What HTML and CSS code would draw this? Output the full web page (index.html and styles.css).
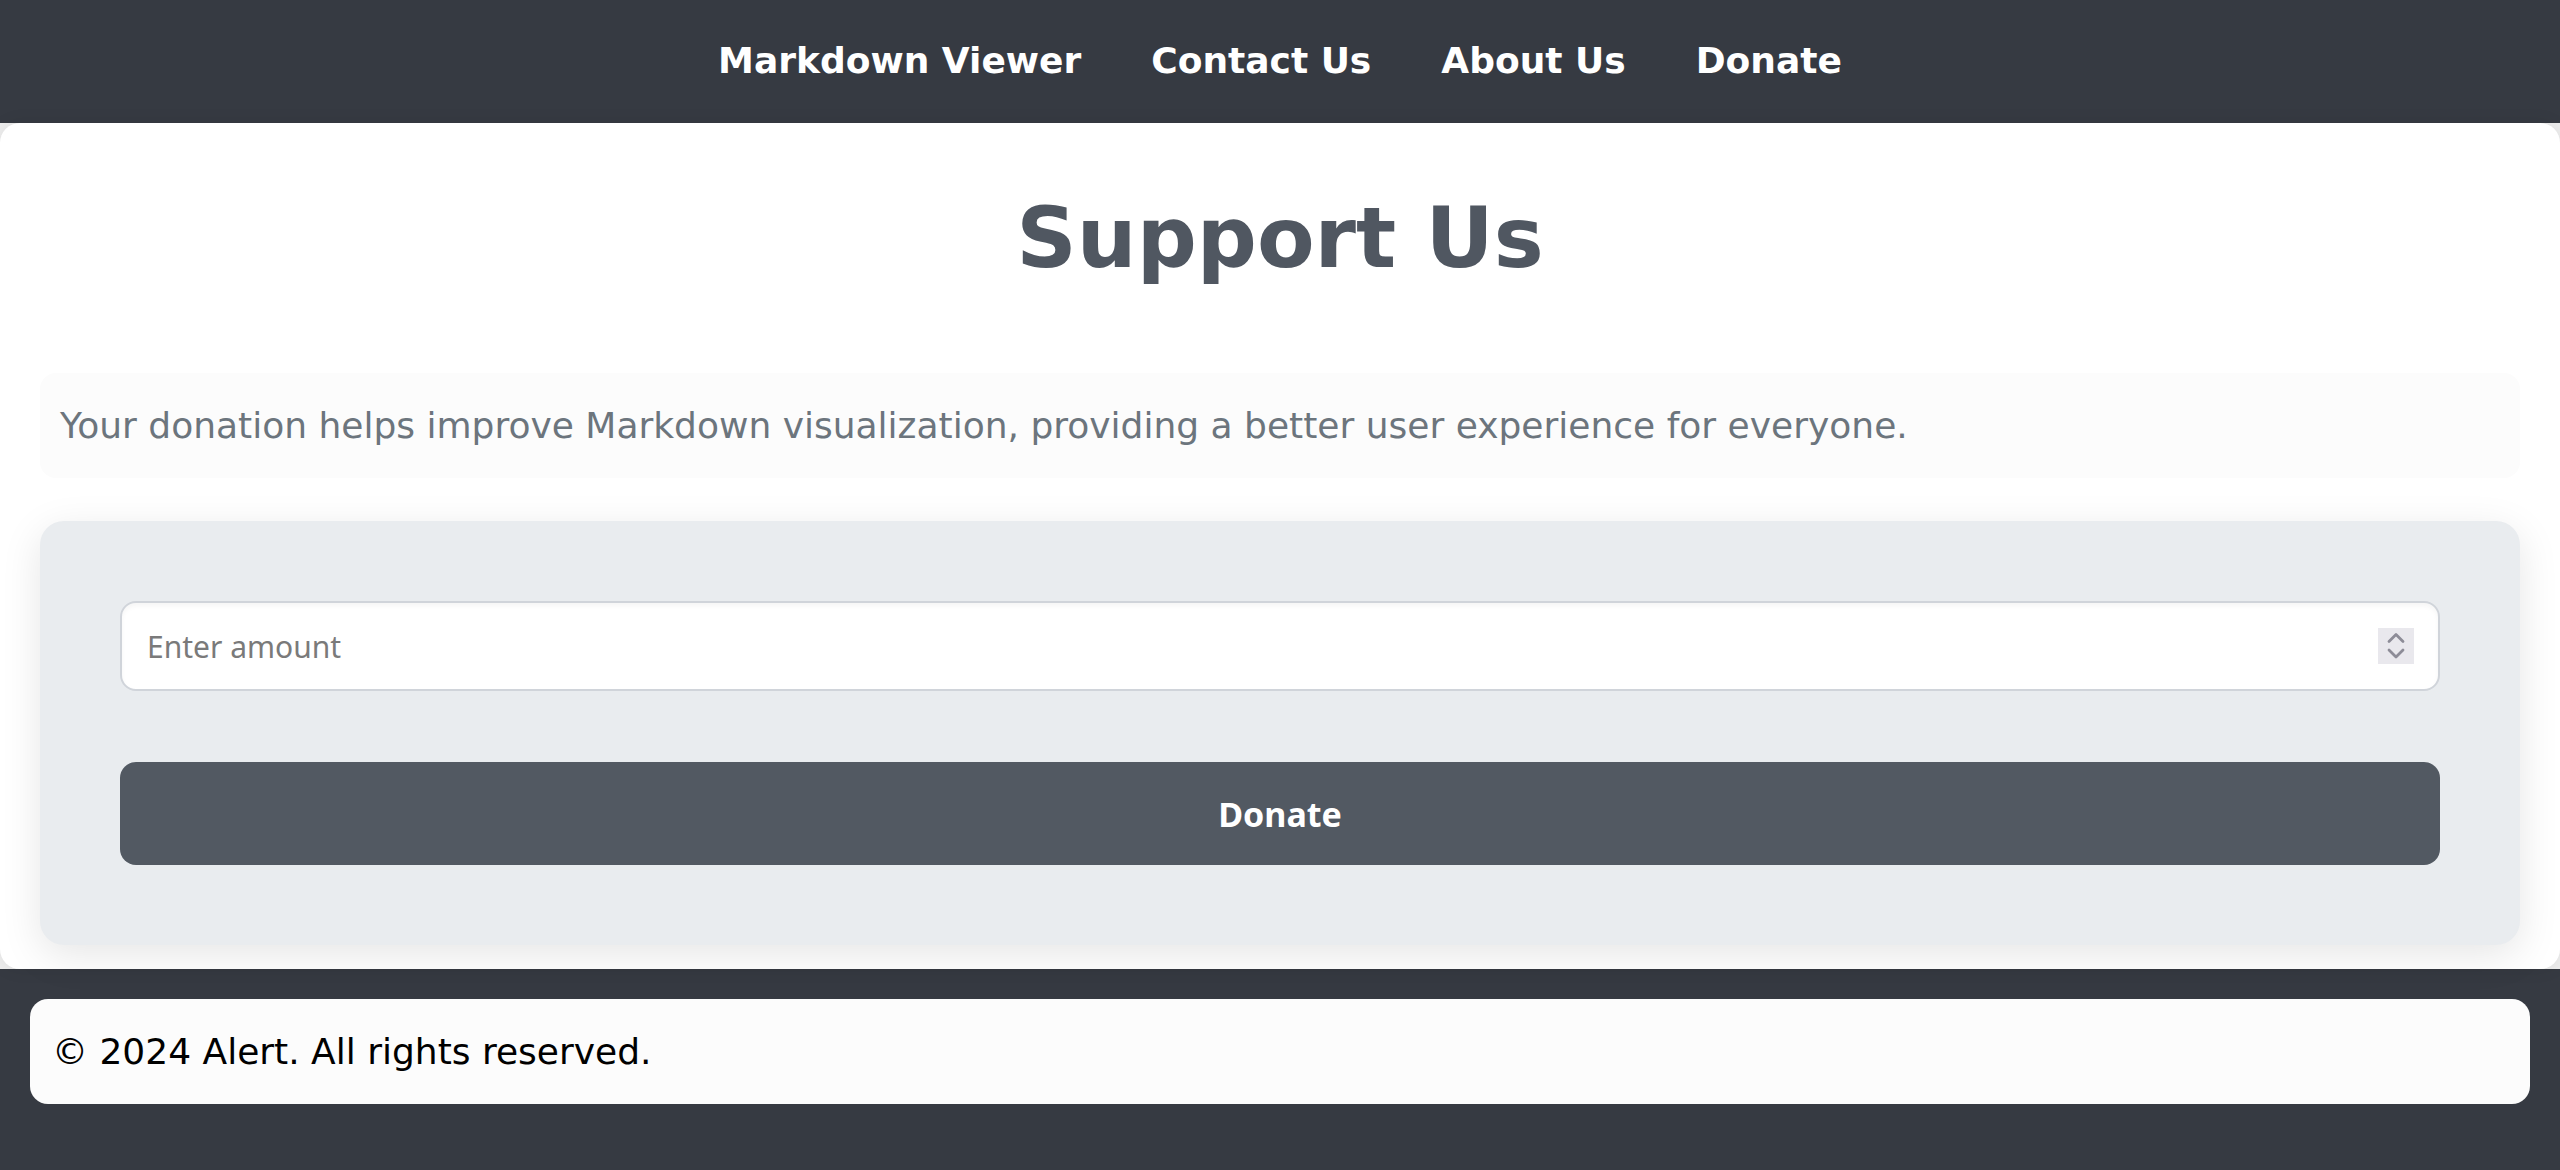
FILE: index.html
```html
<!DOCTYPE html>
<html lang="en">
<head>
<meta charset="utf-8">
<title>Support Us</title>
<link rel="stylesheet" href="styles.css">
</head>
<body>
<div class="page">
  <nav class="nav">
    <a class="nav-link" href="#">Markdown Viewer</a>
    <a class="nav-link" href="#">Contact Us</a>
    <a class="nav-link" href="#">About Us</a>
    <a class="nav-link" href="#">Donate</a>
  </nav>
  <main class="card">
    <h1 class="title">Support Us</h1>
    <p class="intro">Your donation helps improve Markdown visualization, providing a better user experience for everyone.</p>
    <form class="donate-form" onsubmit="return false">
      <div class="field">
        <input class="amount" type="text" placeholder="Enter amount">
        <span class="spinner" aria-hidden="true">
          <svg width="36" height="36" viewBox="0 0 36 36">
            <path d="M11 13.5 L18 6.5 L25 13.5" fill="none" stroke="#8d8c97" stroke-width="2.8" stroke-linecap="round" stroke-linejoin="round"/>
            <path d="M11 22 L18 29 L25 22" fill="none" stroke="#8d8c97" stroke-width="2.8" stroke-linecap="round" stroke-linejoin="round"/>
          </svg>
        </span>
      </div>
      <button class="donate-btn" type="button">Donate</button>
    </form>
  </main>
  <footer class="footer">
    <div class="footer-box">© 2024 Alert. All rights reserved.</div>
  </footer>
</div>
</body>
</html>
```
FILE: styles.css
```css
html, body {
  margin: 0;
  padding: 0;
}
body {
  background: #eeeeee;
  font-family: "DejaVu Sans", sans-serif;
}
.page {
  min-height: 100vh;
  display: flex;
  flex-direction: column;
}
.nav {
  box-sizing: border-box;
  height: 123px;
  padding-bottom: 2px;
  background: #363a42;
  display: flex;
  justify-content: center;
  align-items: center;
  gap: 70px;
}
.nav-link {
  color: #ffffff;
  text-decoration: none;
  font-weight: bold;
  font-size: 36px;
}
.card {
  background: #ffffff;
  border-radius: 20px;
  box-shadow: 0 0 18px rgba(0, 0, 0, 0.08);
  padding: 66px 0 24px;
  position: relative;
  z-index: 1;
}
.title {
  margin: 0 0 86px;
  text-align: center;
  font-size: 84px;
  font-weight: bold;
  color: #505761;
}
.intro {
  margin: 0 40px;
  padding: 32px 20px;
  background: #fcfcfc;
  border-radius: 16px;
  color: #6c757d;
  font-size: 36px;
}
.donate-form {
  margin: 43px 40px 0;
  padding: 80px;
  background: #e9ecef;
  border-radius: 24px;
  box-shadow: 0 10px 40px rgba(0, 0, 0, 0.1);
  display: flex;
  flex-direction: column;
  gap: 71px;
}
.field {
  position: relative;
}
.amount {
  box-sizing: border-box;
  width: 100%;
  height: 90px;
  border: 2px solid #d0d4da;
  border-radius: 16px;
  padding: 0 25px;
  background: #ffffff;
  box-shadow: inset 0 3px 5px rgba(0, 0, 0, 0.04);
  font-family: "Noto Sans", sans-serif;
  font-size: 30px;
  color: #333;
  outline: none;
}
.amount::placeholder {
  color: #7a7a7a;
}
.spinner {
  position: absolute;
  right: 26px;
  top: 27px;
  width: 36px;
  height: 36px;
  background: #e9e8ed;
  display: block;
}
.spinner svg {
  display: block;
}
.donate-btn {
  height: 103px;
  border: none;
  border-radius: 16px;
  background: #525962;
  color: #ffffff;
  font-family: "Noto Sans", sans-serif;
  font-weight: bold;
  font-size: 34px;
  cursor: pointer;
}
.footer {
  flex: 1;
  background: #363a42;
  padding: 30px;
}
.footer-box {
  background: #fcfcfc;
  border-radius: 18px;
  padding: 32px 22px;
  font-size: 36px;
  color: #000000;
}
```
